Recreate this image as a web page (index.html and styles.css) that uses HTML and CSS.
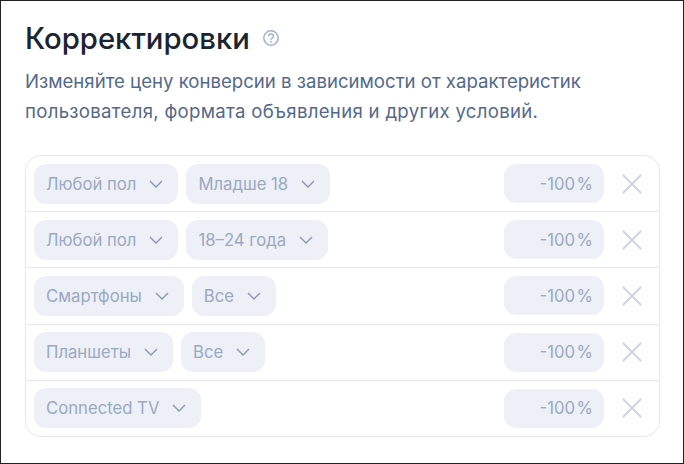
FILE: index.html
```html
<!DOCTYPE html>
<html lang="en">
<head>
    <meta charset="UTF-8">
    <meta name="viewport" content="width=device-width, initial-scale=1.0">
    <title>Корректировки</title>
    <link rel="stylesheet" href="styles.css">
</head>
<body>
    <svg class="sprite" width="0" height="0">
        <symbol id="chevron" viewBox="0 0 14 8"><path d="M1 1l6 6 6-6" fill="none" stroke="currentColor" stroke-width="1.4"/></symbol>
        <symbol id="cross" viewBox="0 0 20 20"><path d="M1 1l18 18M19 1L1 19" fill="none" stroke="currentColor" stroke-width="2"/></symbol>
    </svg>
    <div class="panel">
        <header class="title-row">
            <h1>Корректировки</h1>
            <svg class="help" width="16" height="16" viewBox="0 0 16 16">
                <circle cx="8" cy="8" r="7.2" fill="none" stroke="currentColor" stroke-width="1.5"/>
                <path d="M5.5 6.3c0-1.5 1.1-2.4 2.5-2.4s2.5.9 2.5 2.2c0 2-2.5 1.8-2.5 3.6" fill="none" stroke="currentColor" stroke-width="1.5"/>
                <circle cx="8" cy="11.8" r=".95" fill="currentColor"/>
            </svg>
        </header>
        <p class="desc">Изменяйте цену конверсии в зависимости от характеристик <span class="desc-wide">пользователя, формата объявления и других условий.</span></p>
        <div class="rows">
            <div class="row">
                <div class="select">Любой пол <svg class="chevron"><use href="#chevron"/></svg></div>
                <div class="select">Младше 18 <svg class="chevron"><use href="#chevron"/></svg></div>
                <div class="value">-100&#8202;%</div>
                <svg class="remove"><use href="#cross"/></svg>
            </div>
            <div class="row">
                <div class="select">Любой пол <svg class="chevron"><use href="#chevron"/></svg></div>
                <div class="select">18–24 года <svg class="chevron"><use href="#chevron"/></svg></div>
                <div class="value">-100&#8202;%</div>
                <svg class="remove"><use href="#cross"/></svg>
            </div>
            <div class="row">
                <div class="select">Смартфоны <svg class="chevron"><use href="#chevron"/></svg></div>
                <div class="select">Все <svg class="chevron"><use href="#chevron"/></svg></div>
                <div class="value">-100&#8202;%</div>
                <svg class="remove"><use href="#cross"/></svg>
            </div>
            <div class="row">
                <div class="select">Планшеты <svg class="chevron"><use href="#chevron"/></svg></div>
                <div class="select">Все <svg class="chevron"><use href="#chevron"/></svg></div>
                <div class="value">-100&#8202;%</div>
                <svg class="remove"><use href="#cross"/></svg>
            </div>
            <div class="row">
                <div class="select">Connected TV <svg class="chevron"><use href="#chevron"/></svg></div>
                <div class="value">-100&#8202;%</div>
                <svg class="remove"><use href="#cross"/></svg>
            </div>
        </div>
    </div>
</body>
</html>
```

FILE: styles.css
```css
body {
    margin: 0;
    font-family: Inter, "Noto Sans", sans-serif;
    background-color: #fff;
}
.sprite {
    position: absolute;
}
.panel {
    box-sizing: border-box;
    width: 684px;
    height: 464px;
    padding: 19px 23px 0 24px;
    border: 1px solid #222;
}
.title-row {
    display: flex;
    align-items: center;
    gap: 13px;
    height: 36px;
}
h1 {
    margin: 0;
    font-size: 29.3px;
    font-weight: 500;
    color: #1a2533;
}
.help {
    color: #a3b1c9;
}
.desc {
    margin: 10px 0 0;
    width: 620px;
    font-size: 18.6px;
    line-height: 30px;
    color: #54698a;
}
.desc-wide {
    letter-spacing: .3px;
}
.rows {
    box-sizing: border-box;
    width: 635px;
    margin-top: 29px;
    border: 1px solid #e5e8f3;
    border-radius: 16px;
}
.row {
    display: flex;
    align-items: center;
    gap: 8px;
    height: 56.2px;
    padding: 0 8px;
    border-bottom: 1px solid #e5e8f3;
    box-sizing: border-box;
}
.row:last-child {
    height: 55.2px;
    border-bottom: none;
}
.select {
    display: flex;
    align-items: center;
    gap: 13px;
    height: 40px;
    padding: 0 15px 0 12px;
    border-radius: 12px;
    background-color: #edf0f6;
    font-size: 16.7px;
    color: #9aa9c2;
    white-space: nowrap;
}
.chevron {
    width: 14px;
    height: 8px;
    color: #8b98af;
}
.value {
    display: flex;
    align-items: center;
    justify-content: flex-end;
    box-sizing: border-box;
    width: 100px;
    height: 39px;
    margin-left: auto;
    padding-right: 11px;
    border-radius: 12px;
    background-color: #edf0f6;
    font-size: 16.7px;
    color: #9aa9c2;
}
.remove {
    width: 20px;
    height: 20px;
    margin: 0 9px 0 10px;
    color: #cfd6e2;
}
```
